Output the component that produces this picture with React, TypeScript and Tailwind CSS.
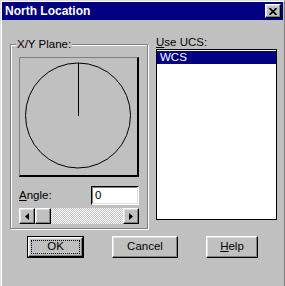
import React from "react";

const raised =
  "border border-t-white border-l-white border-r-black border-b-black shadow-[inset_-1px_-1px_0_#808080,inset_1px_1px_0_#dfdfdf] bg-[#c0c0c0]";

function ArrowLeft() {
  return (
    <svg width="4" height="7" viewBox="0 0 4 7">
      <path d="M0 3.5 L4 0 L4 7 Z" fill="#000" />
    </svg>
  );
}

function ArrowRight() {
  return (
    <svg width="4" height="7" viewBox="0 0 4 7">
      <path d="M4 3.5 L0 0 L0 7 Z" fill="#000" />
    </svg>
  );
}

function Button({ label, mnemonic, width, isDefault }: any) {
  const text = mnemonic ? (
    <span>
      <span className="underline underline-offset-1">{label[0]}</span>
      {label.slice(1)}
    </span>
  ) : (
    label
  );
  if (isDefault) {
    return (
      <div className="border border-black" style={{ width }}>
        <div className={`${raised} flex h-[20px] items-center justify-center p-[2px]`}>
          <div className="flex h-full w-full items-center justify-center border border-dotted border-black">
            {text}
          </div>
        </div>
      </div>
    );
  }
  return (
    <div className={`${raised} flex h-[22px] items-center justify-center`} style={{ width }}>
      {text}
    </div>
  );
}

export default function App() {
  return (
    <div className="h-[286px] w-[285px] overflow-hidden border-l border-t border-r border-[#dfdfdf] border-r-[#808080] bg-[#c0c0c0] font-['Liberation_Sans',Arial,sans-serif] text-[11.5px] text-black">
      <div className="h-full border-l border-t border-white pr-[1px]">
        {/* title bar */}
        <div className="flex h-[18px] items-center justify-between bg-[#000080] pl-[3px] pr-[2px]">
          <span className="text-[12px] font-bold text-white">North Location</span>
          <div className={`${raised} flex h-[14px] w-[16px] items-center justify-center`}>
            <svg width="8" height="7" viewBox="0 0 8 7">
              <path d="M0.5 0 L7.5 7 M7.5 0 L0.5 7" stroke="#000" strokeWidth="1.6" />
            </svg>
          </div>
        </div>

        <div className="flex items-start gap-[8px] pl-[8px]">
          {/* X/Y Plane group */}
          <div className="relative mt-[24px] h-[185px] w-[138px] border border-[#808080] pl-[8px] pt-[12px] shadow-[inset_1px_1px_0_#fff,1px_1px_0_#fff]">
            <span className="absolute left-[5px] top-[-8px] bg-[#c0c0c0] px-[1px] leading-[14px]">
              X/Y Plane:
            </span>
            <div className="h-[120px] w-[120px] border-b-2 border-l border-r-2 border-t border-b-black border-l-[#808080] border-r-black border-t-[#808080]">
              <svg width="117" height="117" viewBox="0 0 117 117">
                <circle cx="58" cy="57.5" r="52.5" fill="none" stroke="#000" strokeWidth="1" />
                <line x1="58.5" y1="5" x2="58.5" y2="58" stroke="#000" strokeWidth="1" />
              </svg>
            </div>
            <div className="mt-[9px] flex h-[19px] w-[120px] items-center justify-between">
              <span>
                <span className="underline underline-offset-1">A</span>ngle:
              </span>
              <div className="flex h-[19px] w-[48px] items-center border border-b-white border-l-black border-r-white border-t-black bg-white pl-[3px] shadow-[inset_-1px_-1px_0_#dfdfdf,inset_1px_1px_0_#808080]">
                0
              </div>
            </div>
            <div className="mt-[3px] flex h-[16px] w-[120px]">
              <div className={`${raised} flex h-[16px] w-[16px] items-center justify-center`}>
                <ArrowLeft />
              </div>
              <div className={`${raised} h-[16px] w-[16px]`} />
              <div className="h-[16px] flex-1 bg-[repeating-conic-gradient(#fff_0_25%,#c0c0c0_0_50%)] bg-[length:2px_2px]" />
              <div className={`${raised} flex h-[16px] w-[16px] items-center justify-center`}>
                <ArrowRight />
              </div>
            </div>
          </div>

          {/* Use UCS list */}
          <div className="mt-[16px] flex flex-col">
            <span className="leading-[13px]">
              <span className="underline underline-offset-1">U</span>se UCS:
            </span>
            <div className="h-[171px] w-[121px] border border-black bg-white pt-[1px]">
              <div className="flex h-[13px] items-center bg-[#000080] pl-[3px] text-white">WCS</div>
            </div>
          </div>
        </div>

        {/* buttons */}
        <div className="mt-[7px] flex gap-[28px] pl-[25px]">
          <Button label="OK" width={57} isDefault />
          <Button label="Cancel" width={66} />
          <Button label="Help" width={52} mnemonic />
        </div>
      </div>
    </div>
  );
}
